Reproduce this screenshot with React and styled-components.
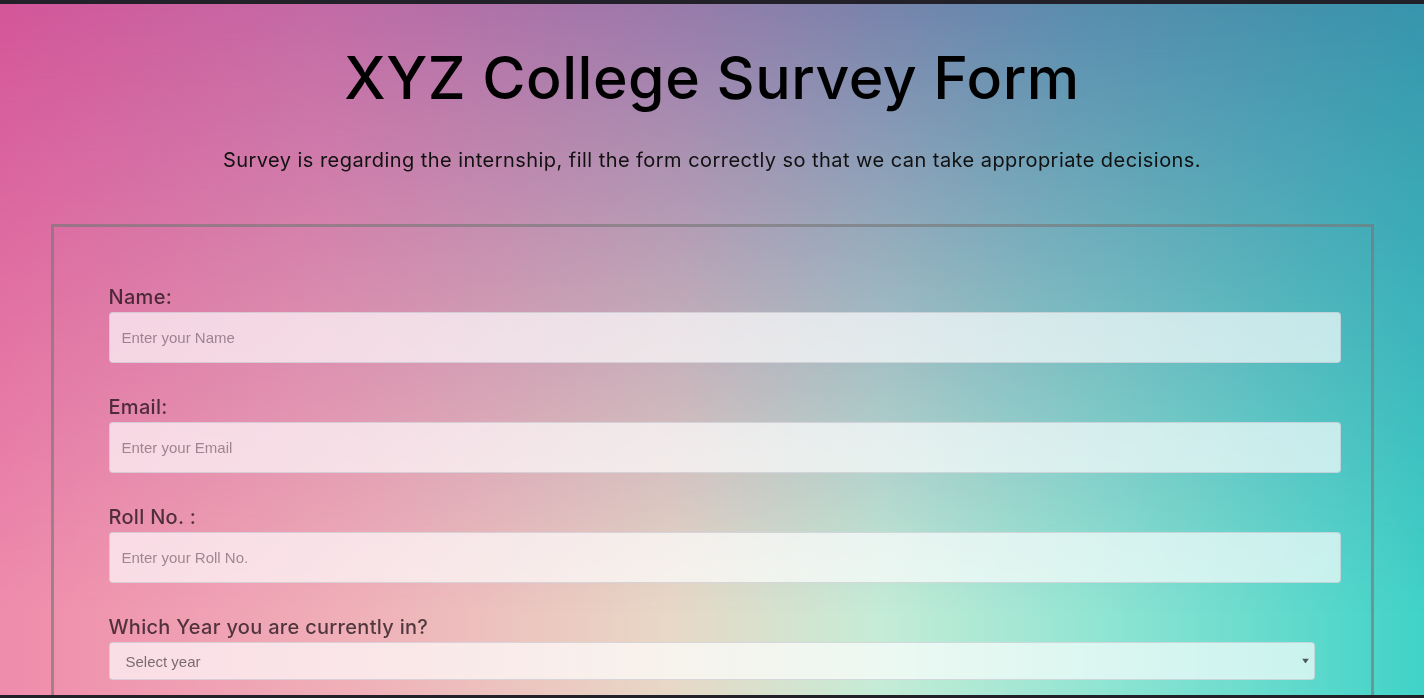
import React from "react";
import styled, { createGlobalStyle } from "styled-components";

const GlobalStyle = createGlobalStyle`
  html, body {
    margin: 0;
    padding: 0;
    background: #22212a;
  }
  * { box-sizing: border-box; }
`;

const Page = styled.div`
  position: relative;
  min-height: 100vh;
  border-top: 4px solid #22212a;
  font-family: Inter, "Noto Sans", sans-serif;
  background: linear-gradient(
    to right,
    #d4569a 0%,
    #c46aa6 22%,
    #987aab 48%,
    #5b8cae 75%,
    #3795ad 100%
  );
  background-attachment: fixed;

  &::before {
    content: "";
    position: fixed;
    inset: 0;
    z-index: 0;
    background: linear-gradient(
      to right,
      #ef8cac 0%,
      #f0b0b8 25%,
      #e8d8c6 47%,
      #c4ecd6 62%,
      #8ee4d2 78%,
      #40d2c8 100%
    );
    -webkit-mask-image: linear-gradient(to bottom, transparent 0%, #000 88%);
    mask-image: linear-gradient(to bottom, transparent 0%, #000 88%);
    pointer-events: none;
  }
`;

const Content = styled.main`
  position: relative;
  z-index: 1;
  display: flex;
  flex-direction: column;
  align-items: center;
`;

const Title = styled.h1`
  margin: 39px 0 0;
  font-size: 59px;
  line-height: 70px;
  font-weight: 500;
  letter-spacing: 0.5px;
  color: #000;
  text-align: center;
`;

const Subtitle = styled.p`
  margin: 35px 0 0;
  font-size: 20px;
  line-height: 24px;
  font-weight: 400;
  letter-spacing: 0.45px;
  color: #111;
  text-align: center;
`;

const Form = styled.form`
  width: 1323px;
  margin-top: 52px;
  border: 3px solid rgba(120, 120, 120, 0.65);
  padding: 58px 55px 120px;
  display: flex;
  flex-direction: column;
  gap: 32px;
`;

const Field = styled.div`
  display: flex;
  flex-direction: column;
  gap: 3px;
`;

const Label = styled.label`
  font-size: 20px;
  line-height: 24px;
  font-weight: 500;
  letter-spacing: 0.3px;
  color: rgba(20, 8, 15, 0.72);
`;

const TextInput = styled.input`
  width: 1232px;
  height: 51px;
  padding: 0 12px;
  border: 1px solid rgba(190, 190, 200, 0.55);
  border-radius: 4px;
  background: rgba(255, 255, 255, 0.68);
  font-family: "Liberation Sans", Arial, sans-serif;
  font-size: 15px;
  color: #333;
  outline: none;

  &::placeholder {
    color: rgba(70, 45, 60, 0.5);
  }
`;

const SelectWrap = styled.div`
  position: relative;
  width: 1206px;
`;

const Select = styled.select`
  appearance: none;
  -webkit-appearance: none;
  width: 100%;
  height: 38px;
  padding: 0 16px;
  border: 1px solid rgba(190, 190, 200, 0.55);
  border-radius: 4px;
  background: rgba(255, 255, 255, 0.68);
  font-family: "Liberation Sans", Arial, sans-serif;
  font-size: 15px;
  color: rgba(40, 30, 35, 0.62);
  outline: none;
`;

const Arrow = styled.svg`
  position: absolute;
  right: 6px;
  top: 50%;
  transform: translateY(-50%);
  width: 7px;
  height: 5px;
  pointer-events: none;
`;

const BottomBar = styled.div`
  position: fixed;
  left: 0;
  right: 0;
  bottom: 0;
  height: 3px;
  background: #22212a;
  z-index: 5;
`;

const fields = [
  { id: "name", label: "Name:", placeholder: "Enter your Name", type: "text" },
  { id: "email", label: "Email:", placeholder: "Enter your Email", type: "email" },
  { id: "roll", label: "Roll No. :", placeholder: "Enter your Roll No.", type: "text" },
];

export default function App() {
  return (
    <>
      <GlobalStyle />
      <Page>
        <Content>
          <Title>XYZ College Survey Form</Title>
          <Subtitle>
            Survey is regarding the internship, fill the form correctly so that we can take appropriate decisions.
          </Subtitle>
          <Form onSubmit={(e) => e.preventDefault()}>
            {fields.map((f) => (
              <Field key={f.id}>
                <Label htmlFor={f.id}>{f.label}</Label>
                <TextInput id={f.id} type={f.type} placeholder={f.placeholder} />
              </Field>
            ))}
            <Field>
              <Label htmlFor="year">Which Year you are currently in?</Label>
              <SelectWrap>
                <Select id="year" defaultValue="">
                  <option value="" disabled>
                    Select year
                  </option>
                  <option value="1">First Year</option>
                  <option value="2">Second Year</option>
                  <option value="3">Third Year</option>
                  <option value="4">Fourth Year</option>
                </Select>
                <Arrow viewBox="0 0 7 5">
                  <path d="M0 0 L7 0 L3.5 5 Z" fill="#4f5a5c" />
                </Arrow>
              </SelectWrap>
            </Field>
          </Form>
        </Content>
        <BottomBar />
      </Page>
    </>
  );
}
